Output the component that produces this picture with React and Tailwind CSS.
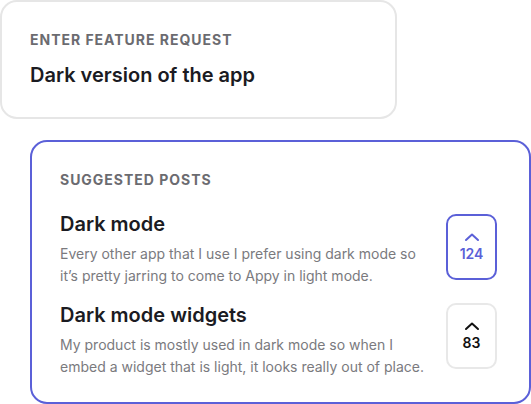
import React from "react";

function Chevron({ className }) {
  return (
    <svg width="16" height="10" viewBox="0 0 16 10" fill="none" className={className}>
      <path d="M2 8 L8 2.5 L14 8" stroke="currentColor" strokeWidth="2" strokeLinecap="round" strokeLinejoin="round" />
    </svg>
  );
}

function Post({ title, desc, votes, active, boxClass }) {
  return (
    <div className="flex items-start justify-between">
      <div className="flex flex-col">
        <div className="text-[20px] leading-[24px] font-semibold text-[#1b1b22]">{title}</div>
        <div className="mt-[7px] text-[14px] leading-[22px] text-[#7a7a7e] w-[372px]">{desc}</div>
      </div>
      <div
        className={
          "mr-[2px] w-[51px] h-[66px] rounded-[10px] border-2 flex flex-col items-center justify-center gap-[4px] " +
          boxClass +
          " " +
          (active ? "border-[#5b60d8] text-[#5b60d8]" : "border-[#e8e8e8] text-[#111]")
        }
      >
        <Chevron />
        <div className="text-[14px] font-semibold leading-[16px]">{votes}</div>
      </div>
    </div>
  );
}

export default function App() {
  return (
    <div className="w-[531px] h-[404px] bg-white relative overflow-hidden" style={{ fontFamily: "Inter, 'Noto Sans', sans-serif" }}>
      <div className="w-[397px] h-[119px] border-2 border-[#e6e6e6] rounded-[17px] pl-[28px] pt-[29px]">
        <div className="text-[14px] leading-[18px] font-bold tracking-[0.07em] text-[#6b6b70]">ENTER FEATURE REQUEST</div>
        <div className="mt-[14px] text-[20px] leading-[24px] font-semibold text-[#1b1b22]">Dark version of the app</div>
      </div>
      <div className="ml-[30px] mt-[21px] w-[501px] h-[264px] border-2 border-[#5b60d8] rounded-[17px] pl-[28px] pr-[30px] pt-[29px]">
        <div className="text-[14px] leading-[18px] font-bold tracking-[0.07em] text-[#6b6b70]">SUGGESTED POSTS</div>
        <div className="mt-[23px] flex flex-col gap-[16px]">
          <Post
            title="Dark mode"
            desc="Every other app that I use I prefer using dark mode so it’s pretty jarring to come to Appy in light mode."
            votes="124"
            active
            boxClass="mt-[2px]"
          />
          <Post
            title="Dark mode widgets"
            desc="My product is mostly used in dark mode so when I embed a widget that is light, it looks really out of place."
            votes="83"
            boxClass="mt-[0px]"
          />
        </div>
      </div>
    </div>
  );
}
